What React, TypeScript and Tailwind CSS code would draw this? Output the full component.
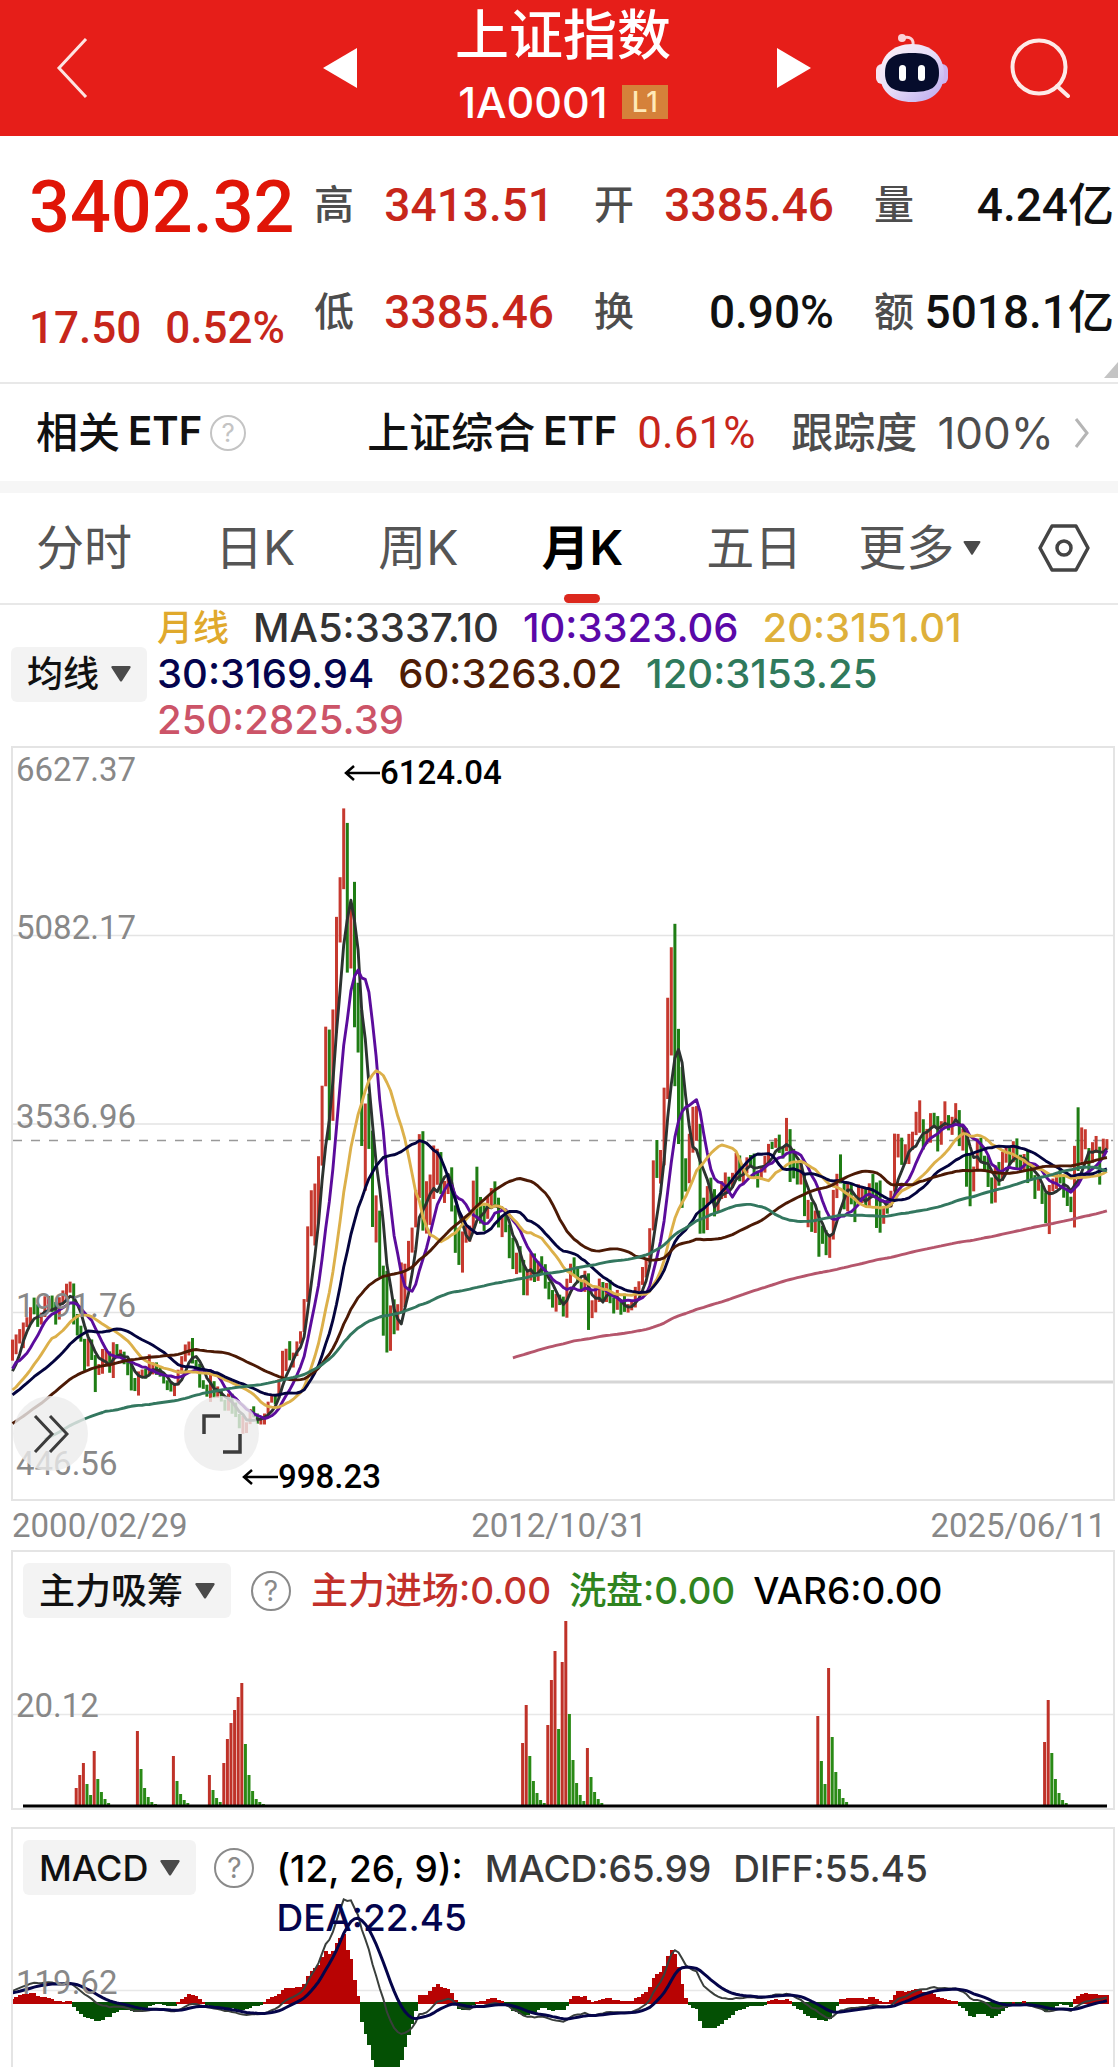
import React, { useState } from "react";

// [high, low, close] per month, starting 2000/02
const MONTHS: [number, number, number][] = [
  [1770, 1597, 1715], [1812, 1650, 1800], [1856, 1738, 1836], [1910, 1700, 1894], [1953, 1872, 1928], [2035, 1900, 2023],
  [2114, 1977, 2021], [2059, 1874, 1910], [1990, 1893, 1961], [2125, 1955, 2070], [2127, 2010, 2073],
  [2131, 1997, 2065], [2078, 1893, 1959], [2117, 1934, 2112], [2173, 2063, 2119], [2228, 2100, 2214], [2245, 2155, 2218],
  [2230, 1894, 1920], [1980, 1804, 1834], [1884, 1753, 1764], [1776, 1515, 1689], [1778, 1550, 1747], [1771, 1603, 1645],
  [1643, 1340, 1491], [1569, 1480, 1524], [1693, 1490, 1603], [1695, 1564, 1667], [1673, 1498, 1515], [1748, 1455, 1732],
  [1733, 1634, 1651], [1687, 1622, 1666], [1671, 1568, 1581], [1590, 1478, 1507], [1577, 1353, 1434], [1455, 1348, 1357],
  [1509, 1311, 1499], [1524, 1464, 1511], [1534, 1450, 1510], [1649, 1477, 1521], [1583, 1485, 1576], [1583, 1481, 1486],
  [1545, 1466, 1476], [1495, 1410, 1421], [1436, 1356, 1367], [1431, 1344, 1348], [1410, 1307, 1397], [1523, 1395, 1497],
  [1634, 1491, 1590], [1730, 1590, 1675], [1754, 1640, 1741], [1783, 1574, 1595], [1603, 1498, 1555], [1572, 1376, 1399],
  [1437, 1366, 1386], [1400, 1302, 1342], [1496, 1259, 1396], [1429, 1290, 1320], [1386, 1292, 1340], [1357, 1262, 1266],
  [1277, 1187, 1191], [1328, 1187, 1306], [1326, 1162, 1181], [1254, 1135, 1159], [1160, 1043, 1060], [1146, 998, 1080],
  [1092, 1004, 1083], [1201, 1077, 1162], [1223, 1131, 1155], [1164, 1080, 1092], [1122, 1074, 1099], [1164, 1074, 1161],
  [1261, 1161, 1258], [1309, 1253, 1299], [1310, 1238, 1298], [1445, 1293, 1440], [1678, 1443, 1641], [1695, 1512, 1672],
  [1757, 1600, 1612], [1663, 1541, 1658], [1755, 1635, 1752], [1838, 1736, 1837], [2102, 1832, 2099], [2698, 2079, 2675],
  [2994, 2617, 2786], [3049, 2541, 2881], [3273, 2723, 3183], [3851, 3196, 3841], [4335, 3846, 4109], [4311, 3404, 3820],
  [4476, 3563, 4471], [5235, 4285, 5218], [5560, 5025, 5552], [6124, 5462, 5954], [6005, 4778, 4871], [5336, 4812, 5261],
  [5522, 4330, 4383], [4695, 4123, 4348], [4472, 3357, 3472], [3705, 2990, 3693], [3786, 3333, 3433], [3483, 2693, 2736],
  [2952, 2566, 2775], [2827, 2284, 2397], [2376, 1802, 2293], [2333, 1664, 1728], [2050, 1678, 1871], [2100, 1814, 1820],
  [2060, 1844, 1990], [2402, 1987, 2082], [2392, 2037, 2373], [2579, 2345, 2477], [2688, 2483, 2632], [2997, 2690, 2959],
  [3454, 2930, 3412], [3478, 2663, 2667], [3068, 2639, 2779], [3123, 2710, 2995], [3361, 2923, 3195], [3334, 3039, 3277],
  [3307, 2963, 2989], [3070, 2890, 3051], [3131, 2963, 3109], [3182, 2820, 2870], [2870, 2481, 2592], [2686, 2382, 2398],
  [2656, 2319, 2637], [2701, 2564, 2638], [2704, 2573, 2655], [3073, 2667, 2978], [3187, 2758, 2820], [2939, 2721, 2808],
  [2868, 2661, 2790], [2944, 2760, 2905], [3012, 2850, 2928], [3067, 2866, 2911], [2933, 2689, 2743], [2788, 2610, 2762],
  [2826, 2650, 2701], [2712, 2437, 2567], [2605, 2348, 2359], [2482, 2307, 2468], [2536, 2319, 2333], [2423, 2134, 2199],
  [2324, 2132, 2292], [2478, 2254, 2428], [2476, 2242, 2262], [2415, 2251, 2396], [2453, 2309, 2372], [2388, 2188, 2225],
  [2244, 2100, 2103], [2176, 2032, 2047], [2145, 1999, 2086], [2138, 2053, 2068], [2122, 1959, 1980], [2269, 1949, 2269],
  [2392, 2234, 2385], [2444, 2289, 2365], [2369, 2232, 2236], [2250, 2165, 2177], [2334, 2161, 2300], [2313, 1849, 1979],
  [2092, 1946, 1993], [2198, 1993, 2098], [2270, 2078, 2174], [2242, 2093, 2141], [2234, 2078, 2220], [2260, 2068, 2115],
  [2113, 1984, 2033], [2177, 2014, 2056], [2079, 1974, 2033], [2146, 1997, 2026], [2061, 1991, 2039], [2087, 2010, 2048],
  [2202, 2033, 2201], [2248, 2168, 2217], [2365, 2218, 2363], [2423, 2279, 2420], [2683, 2401, 2682], [3239, 2665, 3234],
  [3406, 3095, 3210], [3324, 3049, 3310], [3835, 3198, 3747], [4572, 3742, 4441], [4986, 4099, 4611], [5178, 3847, 4277],
  [4317, 3373, 3663], [4006, 2850, 3205], [3256, 2983, 3052], [3457, 3052, 3382], [3678, 3302, 3445], [3684, 3399, 3539],
  [3538, 2638, 2737], [2933, 2640, 2687], [3028, 2668, 3003], [3097, 2905, 2938], [3003, 2780, 2916], [2945, 2807, 2929],
  [3069, 2922, 2979], [3140, 2931, 3085], [3105, 2969, 3004], [3137, 3016, 3100], [3301, 3094, 3250], [3279, 3068, 3103],
  [3174, 3044, 3159], [3264, 3132, 3241], [3283, 3193, 3222], [3295, 3097, 3154], [3154, 3016, 3117], [3193, 3081, 3192],
  [3276, 3139, 3273], [3374, 3200, 3360], [3391, 3332, 3348], [3421, 3342, 3393], [3450, 3300, 3317], [3341, 3254, 3307],
  [3587, 3314, 3480], [3495, 3062, 3259], [3333, 3091, 3168], [3220, 3041, 3082], [3219, 3041, 3095], [3128, 2782, 2847],
  [2915, 2691, 2876], [2897, 2653, 2725], [2827, 2644, 2821], [2827, 2449, 2602], [2703, 2555, 2588], [2666, 2462, 2493],
  [2618, 2440, 2584], [2997, 2590, 2940], [3129, 2930, 3090], [3288, 3050, 3078], [3052, 2838, 2898], [3045, 2822, 2978],
  [3048, 2879, 2932], [2915, 2733, 2886], [3042, 2878, 2905], [3026, 2889, 2929], [3009, 2858, 2871], [3051, 2857, 3050],
  [3127, 2955, 2976], [3058, 2685, 2880], [3074, 2646, 2750], [2865, 2719, 2860], [2914, 2802, 2852], [2990, 2855, 2984],
  [3458, 2984, 3310], [3456, 3263, 3395], [3425, 3202, 3218], [3371, 3209, 3224], [3456, 3209, 3391], [3474, 3325, 3473],
  [3637, 3446, 3483], [3731, 3465, 3509], [3576, 3328, 3441], [3497, 3373, 3446], [3626, 3384, 3615], [3629, 3518, 3591],
  [3602, 3312, 3397], [3560, 3367, 3543], [3723, 3510, 3568], [3610, 3485, 3547], [3596, 3448, 3563], [3708, 3559, 3639],
  [3651, 3356, 3361], [3500, 3319, 3462], [3500, 3023, 3252], [3290, 2863, 3047], [3188, 2985, 3186], [3418, 3150, 3398],
  [3424, 3226, 3253], [3277, 3155, 3202], [3277, 3021, 3024], [3099, 2885, 2893], [3198, 2893, 3151], [3226, 3031, 3089],
  [3310, 3073, 3255], [3342, 3220, 3279], [3342, 3200, 3272], [3396, 3224, 3323], [3419, 3172, 3204], [3285, 3144, 3202],
  [3291, 3151, 3291], [3322, 3053, 3119], [3193, 3078, 3110], [3118, 2923, 3018], [3090, 2990, 3029], [3041, 2882, 2974],
  [2976, 2724, 2788], [3037, 2635, 3015], [3090, 2986, 3041], [3128, 3005, 3104], [3174, 3050, 3086], [3113, 2933, 2967],
  [3010, 2865, 2938], [2941, 2815, 2842], [3358, 2689, 3336], [3674, 3152, 3279], [3509, 3227, 3326], [3494, 3330, 3351],
  [3340, 3140, 3250], [3388, 3220, 3320], [3439, 3300, 3335], [3351, 3040, 3279], [3417, 3262, 3347], [3413, 3330, 3402],
];

// closes before the visible range (1990/12 - 2000/01), needed by the averages
const HISTORY = [
  127,
  129, 132, 120, 113, 114, 137, 143, 178, 180, 218, 259, 292,
  313, 364, 381, 445, 1234, 1191, 1052, 823, 702, 507, 724, 780,
  1198, 1339, 925, 1358, 935, 1007, 881, 895, 890, 814, 984, 833,
  770, 770, 704, 592, 556, 469, 333, 785, 791, 654, 683, 647,
  562, 549, 646, 579, 700, 630, 695, 723, 722, 717, 641, 555,
  537, 552, 556, 681, 643, 804, 822, 810, 875, 976, 1032, 917,
  964, 1040, 1234, 1393, 1285, 1250, 1189, 1221, 1097, 1180, 1139, 1194,
  1222, 1206, 1243, 1343, 1411, 1339, 1316, 1150, 1242, 1217, 1247, 1146,
  1134, 1090, 1158, 1120, 1279, 1689, 1601, 1627, 1570, 1504, 1434, 1366,
  1535,
];

const CLOSES = [...HISTORY, ...MONTHS.map((m) => m[2])];

// [first month index, number of red bars, bar heights]
const FLOWS: [number, number, number[]][] = [
  [18, 3, [17, 30, 42, 21, 10]],
  [23, 1, [54, 26, 13, 6, 2]],
  [35, 1, [74, 36, 17, 8, 3, 1]],
  [45, 1, [49, 24, 11, 5, 2]],
  [55, 1, [30, 15, 7, 3]],
  [59, 6, [42, 66, 82, 95, 108, 122, 61, 30, 14, 6, 3, 1]],
  [142, 2, [62, 100, 49, 24, 12, 5, 2]],
  [149, 3, [80, 125, 154, 76]],
  [153, 2, [143, 184, 91, 45, 22, 10, 4]],
  [160, 1, [57, 28, 13, 6, 2]],
  [224, 1, [89, 44, 21]],
  [227, 1, [137, 68, 33, 16, 7, 3]],
  [287, 2, [63, 105, 52, 26, 12, 5, 2]],
];

const STEP = 3.6;
const xAt = (i: number) => i * STEP - 0.5;
const yAt = (v: number) => (6627.37 - v) / 8.197 - 1;

function maPoints(n: number) {
  const points: string[] = [];
  MONTHS.forEach((_, i) => {
    const end = HISTORY.length + i + 1;
    if (end < n) return;
    const sum = CLOSES.slice(end - n, end).reduce((a, b) => a + b, 0);
    points.push(`${xAt(i).toFixed(1)},${yAt(sum / n).toFixed(1)}`);
  });
  return points.join(" ");
}

function macd() {
  let fast = CLOSES[0];
  let slow = CLOSES[0];
  let dea = 0;
  const rows = CLOSES.map((c) => {
    fast = (fast * 11 + c * 2) / 13;
    slow = (slow * 25 + c * 2) / 27;
    const diff = fast - slow;
    dea = (dea * 8 + diff * 2) / 10;
    return { diff, dea, bar: (diff - dea) * 2 };
  });
  return rows.slice(HISTORY.length);
}

const AVERAGES = [
  { n: 5, label: "MA5:3337.10", color: "#2c3330", text: "text-[#333333]" },
  { n: 10, label: "10:3323.06", color: "#5b0c9c", text: "text-[#5a08a8]" },
  { n: 20, label: "20:3151.01", color: "#dcb04a", text: "text-[#deb03a]" },
  { n: 30, label: "30:3169.94", color: "#04043e", text: "text-[#04044e]" },
  { n: 60, label: "60:3263.02", color: "#4c1a05", text: "text-[#4f1d06]" },
  { n: 120, label: "120:3153.25", color: "#33775f", text: "text-[#2f7a5c]" },
  { n: 250, label: "250:2825.39", color: "#b5566c", text: "text-[#cc5468]" },
];

function Caret({ className }: { className: string }) {
  return (
    <svg viewBox="0 0 20 16" className={className} fill="#4a4a4a" aria-hidden="true">
      <path d="M1.5 0h17c1 0 1.5 1 1 1.800L11 15c-.5.8-1.500.8-2 0L.5 1.800C0 1 .5 0 1.500 0z" />
    </svg>
  );
}

function Help({ className }: { className: string }) {
  return (
    <button type="button" aria-label="说明" className={`flex shrink-0 items-center justify-center rounded-full border-2 leading-none ${className}`}>
      ?
    </button>
  );
}

function IndicatorButton({ children }: { children: React.ReactNode }) {
  return (
    <button type="button" className="flex h-[55px] shrink-0 items-center gap-3 rounded-md bg-[#f3f3f3] px-4 text-[36px] font-medium text-[#111]">
      {children}
      <Caret className="h-4 w-5" />
    </button>
  );
}

function Header() {
  return (
    <header className="grid h-[136px] grid-cols-[1fr_488px_1fr] items-center bg-[#e61e19] pl-4 text-white">
      <button type="button" aria-label="返回" className="ml-10 w-fit">
        <svg viewBox="0 0 32 60" className="h-[60px] w-8" fill="none" stroke="#fde4e2" strokeWidth="3">
          <path d="M30 1 3 30l27 29" />
        </svg>
      </button>
      <div className="flex items-center justify-between">
        <button type="button" aria-label="上一个">
          <svg viewBox="0 0 34 40" className="h-10 w-[34px]" fill="#fff">
            <path d="M34 0v40L0 20z" />
          </svg>
        </button>
        <div className="mr-2 flex flex-col items-center">
          <h1 className="text-[54px] leading-[68px] font-medium">上证指数</h1>
          <div className="flex items-center gap-3.5 text-[43px] leading-[64px] font-medium">
            1A0001
            <span className="bg-[#d5813a] px-2.5 text-[28px] leading-[34px] font-medium text-[#ffe9b8]">L1</span>
          </div>
        </div>
        <button type="button" aria-label="下一个">
          <svg viewBox="0 0 34 40" className="h-10 w-[34px]" fill="#fff">
            <path d="M0 0v40l34-20z" />
          </svg>
        </button>
      </div>
      <div className="flex items-center justify-between pr-12 pl-16">
        <button type="button" aria-label="智能助手">
          <svg viewBox="0 0 74 70" className="h-[70px] w-[74px]">
            <defs>
              <linearGradient id="head" x1="0" y1="0" x2="1" y2="1">
                <stop offset="0" stopColor="#fff3f6" />
                <stop offset=".5" stopColor="#e6dcf8" />
                <stop offset="1" stopColor="#b9a6ee" />
              </linearGradient>
            </defs>
            <path d="M28 5c7-2 11 1 10 8" fill="none" stroke="#fbd3d8" strokeWidth="3" />
            <circle cx="27" cy="5" r="4" fill="#fbd3d8" />
            <rect x="1" y="31" width="12" height="20" rx="6" fill="#f6e4f2" />
            <rect x="61" y="31" width="12" height="20" rx="6" fill="#cdb4ef" />
            <path d="M37 11c19 0 32 12 32 30S56 69 37 69 5 59 5 41s13-30 32-30z" fill="url(#head)" />
            <path d="M37 20c18 0 27 5 27 20s-9 19-27 19-27-4-27-19 9-20 27-20z" fill="#060c2c" />
            <rect x="24" y="32" width="7" height="16" rx="3.500" fill="#fff" />
            <rect x="43" y="32" width="7" height="16" rx="3.500" fill="#fff" />
          </svg>
        </button>
        <button type="button" aria-label="搜索">
          <svg viewBox="0 0 60 60" className="h-[60px] w-[60px]" fill="none" stroke="#fdeae8" strokeWidth="4">
            <circle cx="29" cy="29" r="26.500" />
            <path d="m47 48 11 10" strokeLinecap="round" />
          </svg>
        </button>
      </div>
    </header>
  );
}

const QUOTES = [
  { label: "高", value: "3413.51", color: "text-[#c7261b]" },
  { label: "开", value: "3385.46", color: "text-[#c7261b]" },
  { label: "量", value: "4.24亿", color: "text-[#111]" },
  { label: "低", value: "3385.46", color: "text-[#c7261b]" },
  { label: "换", value: "0.90%", color: "text-[#111]" },
  { label: "额", value: "5018.1亿", color: "text-[#111]" },
];

function Quote() {
  return (
    <section className="relative flex h-[248px] border-b-2 border-[#e8e8e8] font-[Roboto,'Noto_Sans_CJK_SC',sans-serif] font-medium">
      <div className="flex w-[314px] shrink-0 flex-col gap-4 pt-5 pl-[29px] leading-[104px] whitespace-nowrap">
        <strong className="text-[72px] font-medium text-[#e01507]">3402.32</strong>
        <div className="flex gap-6 text-[44px] text-[#c7261b]">
          <span>17.50</span>
          <span>0.52%</span>
        </div>
      </div>
      <dl className="grid flex-1 grid-cols-3 content-start gap-x-10 pt-4 pr-1 text-[46px] leading-[107px] whitespace-nowrap">
        {QUOTES.map((q) => (
          <div key={q.label} className="flex h-[107px] justify-between">
            <dt className="text-[40px] text-[#4d4d4d]">{q.label}</dt>
            <dd className={q.color}>{q.value}</dd>
          </div>
        ))}
      </dl>
      <svg viewBox="0 0 14 16" className="absolute right-0 bottom-1 h-4 w-3.5" fill="#c4c4c4" aria-hidden="true">
        <path d="M14 0v16H0z" />
      </svg>
    </section>
  );
}

function EtfRow() {
  return (
    <section className="flex h-[109px] items-center justify-between border-b-12 border-[#f6f6f6] pr-7 pl-9 text-[42px] whitespace-nowrap">
      <div className="flex items-center gap-2 font-medium text-[#111]">
        <span className="flex gap-2">
          相关<span className="text-[40px] font-semibold">ETF</span>
        </span>
        <Help className="h-9 w-9 border-[#c4c4c4] text-[26px] font-normal text-[#c4c4c4]" />
      </div>
      <a href="#etf" className="flex items-center gap-5 text-[#4d4d4d]">
        <span className="flex gap-2 font-medium text-[#111]">
          上证综合<span className="text-[40px] font-semibold">ETF</span>
        </span>
        <span className="font-[Roboto] text-[44px] text-[#c7261b]">0.61%</span>
        <span className="ml-4 font-medium">跟踪度</span>
        <span className="text-[44px]">100%</span>
        <svg viewBox="0 0 16 32" className="h-8 w-4" fill="none" stroke="#b5b5b5" strokeWidth="3">
          <path d="m2 2 11 14L2 30" />
        </svg>
      </a>
    </section>
  );
}

const TABS = ["分时", "日K", "周K", "月K", "五日"];

function Tabs() {
  const [active, setActive] = useState("月K");

  return (
    <nav className="flex h-28 items-stretch justify-between border-b-2 border-[#e8e8e8] pr-7 pl-9 text-[48px] whitespace-nowrap text-[#555]">
      <div className="flex gap-[83px]">
        {TABS.map((tab) => (
          <button
            key={tab}
            type="button"
            onClick={() => setActive(tab)}
            className={
              tab === active
                ? "relative font-semibold text-black after:absolute after:bottom-0 after:left-1/2 after:h-[9px] after:w-9 after:-translate-x-1/2 after:rounded-full after:bg-[#dc281e]"
                : "relative"
            }
          >
            {tab}
          </button>
        ))}
      </div>
      <button type="button" className="flex items-center gap-2">
        更多
        <Caret className="h-3.5 w-5" />
      </button>
      <button type="button" aria-label="设置">
        <svg viewBox="0 0 52 48" className="h-12 w-[52px]" fill="none" stroke="#444" strokeWidth="3.500" strokeLinejoin="round">
          <path d="M14 2h24l12 22-12 22H14L2 24z" />
          <circle cx="26" cy="24" r="7" />
        </svg>
      </button>
    </nav>
  );
}

function PriceChart() {
  return (
    <div className="relative mr-[3px] ml-[11px] h-[755px] border-2 border-[#e4e4e4] font-[Roboto] text-[33px] leading-9 text-[#888]">
      <svg viewBox="0 0 1100 751" preserveAspectRatio="none" className="block h-full w-full overflow-visible">
        <g stroke="#e4e4e4" strokeWidth="1.500">
          <path d="M0 187.500h1100M0 376h1100M0 564.500h1100" />
          <path d="M292 634h808" stroke="#d6d6d6" strokeWidth="3" />
        </g>
        <path d="M0 392.500h1100" stroke="#999" strokeWidth="1.500" strokeDasharray="9 9" />
        {MONTHS.map(([high, low, close], i) => {
          const prev = i ? MONTHS[i - 1][2] : 1535;
          return (
            <rect
              key={i}
              x={xAt(i) - 1.5}
              y={yAt(high)}
              width="3"
              height={yAt(low) - yAt(high)}
              fill={close >= prev ? "#c6392f" : "#1f7d14"}
            />
          );
        })}
        {AVERAGES.map((a) => (
          <polyline key={a.n} points={maPoints(a.n)} fill="none" stroke={a.color} strokeWidth="2.900" strokeLinejoin="round" />
        ))}
      </svg>

      <span className="absolute top-1 left-[3px]">6627.37</span>
      <span className="absolute top-[162px] left-[3px]">5082.17</span>
      <span className="absolute top-[351px] left-[3px]">3536.96</span>
      <span className="absolute top-[540px] left-[3px]">1991.76</span>
      <span className="absolute bottom-[17px] left-[3px]">446.56</span>

      <Marker className="top-[7px] left-[331px]" value="6124.04" />
      <Marker className="top-[711px] left-[229px]" value="998.23" />

      <button type="button" aria-label="展开" className="absolute top-[648px] left-0 flex h-[75px] w-[75px] items-center justify-center rounded-full bg-[#ececec]/80">
        <svg viewBox="0 0 36 38" className="h-[38px] w-9" fill="none" stroke="#3c3c3c" strokeWidth="3">
          <path d="m2 1 17 18L2 37M17 1l17 18-17 18" />
        </svg>
      </button>
      <button type="button" aria-label="全屏" className="absolute top-[648px] left-[171px] flex h-[75px] w-[75px] items-center justify-center rounded-full bg-[#ececec]/80">
        <svg viewBox="0 0 40 40" className="h-10 w-10" fill="none" stroke="#3c3c3c" strokeWidth="3.500">
          <path d="M18 2H2v18M38 20v18H21" />
        </svg>
      </button>
    </div>
  );
}

function Marker({ className, value }: { className: string; value: string }) {
  return (
    <span className={`absolute flex items-center font-medium text-black ${className}`}>
      <svg viewBox="0 0 36 18" className="h-[18px] w-9" fill="none" stroke="#000" strokeWidth="2.500">
        <path d="M10 2 2 9l8 7M2 9h34" />
      </svg>
      {value}
    </span>
  );
}

function FlowPanel() {
  return (
    <section className="relative mr-[3px] ml-[11px] h-[260px] border-2 border-[#e4e4e4]">
      <svg viewBox="0 0 1100 256" preserveAspectRatio="none" className="absolute inset-0 h-full w-full">
        <path d="M0 162.500h1100" stroke="#e8e8e8" strokeWidth="1.500" />
        {FLOWS.map(([start, reds, heights]) =>
          heights.map((h, k) => (
            <rect
              key={`${start}-${k}`}
              x={xAt(start + k) - 2.6}
              y={253 - h}
              width="3"
              height={h}
              fill={k < reds ? "#bf3229" : "#2a8a16"}
            />
          ))
        )}
        <path d="M10 254h1084" stroke="#000" strokeWidth="3" />
      </svg>
      <div className="relative flex items-center pt-[11px] pl-[10px] text-[37px] font-medium whitespace-nowrap">
        <IndicatorButton>主力吸筹</IndicatorButton>
        <Help className="ml-5 h-10 w-10 border-[#8a8a8a] text-[28px] font-normal text-[#8a8a8a]" />
        <div className="ml-5 flex gap-[18px]">
          <span className="text-[#c2302a]">主力进场:0.00</span>
          <span className="text-[#2f8420]">洗盘:0.00</span>
          <span className="text-black">VAR6:0.00</span>
        </div>
      </div>
      <span className="absolute top-[136px] left-[3px] font-[Roboto] text-[33px] leading-9 text-[#888]">20.12</span>
    </section>
  );
}

function MacdPanel() {
  const rows = macd();
  const zero = 174;
  const y = (v: number) => zero - v / 9.9;
  const line = (key: "diff" | "dea") => rows.map((r, i) => `${xAt(i).toFixed(1)},${y(r[key]).toFixed(1)}`).join(" ");

  return (
    <section className="relative mt-[17px] mr-[3px] ml-[11px] h-[240px] overflow-hidden border-2 border-b-0 border-[#e4e4e4]">
      <svg viewBox="0 0 1100 238" preserveAspectRatio="none" className="absolute inset-0 h-full w-full">
        <path d="M0 161.500h1100" stroke="#e8e8e8" strokeWidth="1.500" />
        {rows.map((r, i) => (
          <rect
            key={i}
            x={xAt(i) - 1.8}
            y={r.bar >= 0 ? y(r.bar) - 1 : zero - 1}
            width="4"
            height={Math.abs(r.bar) / 9.9 + 2}
            fill={r.bar >= 0 ? "#b80303" : "#045004"}
            shapeRendering="crispEdges"
          />
        ))}
        <polyline points={line("diff")} fill="none" stroke="#3a3f3c" strokeWidth="2" />
        <polyline points={line("dea")} fill="none" stroke="#05054a" strokeWidth="3" />
      </svg>
      <div className="relative flex items-start pt-[11px] pl-[10px] text-[37px] font-medium">
        <IndicatorButton>MACD</IndicatorButton>
        <Help className="mt-2 ml-[18px] h-10 w-10 border-[#8a8a8a] text-[28px] font-normal text-[#8a8a8a]" />
        <div className="ml-[22px] flex flex-wrap gap-x-[22px] pt-1 leading-[49px] whitespace-nowrap">
          <span className="text-black">(12, 26, 9):</span>
          <span className="text-[#3a3a3a]">MACD:65.99</span>
          <span className="text-[#3a3a3a]">DIFF:55.45</span>
          <span className="text-[#04044e]">DEA:22.45</span>
        </div>
      </div>
      <span className="absolute top-[136px] left-[3px] font-[Roboto] text-[33px] leading-9 text-[#888]">119.62</span>
    </section>
  );
}

function App() {
  return (
    <main className="w-full overflow-hidden bg-white font-[Inter,'Noto_Sans_CJK_SC',sans-serif]">
      <Header />
      <Quote />
      <EtfRow />
      <Tabs />
      <div className="flex items-center pr-20 pb-[3px] pl-[11px]">
        <IndicatorButton>均线</IndicatorButton>
        <div className="ml-2.5 flex flex-wrap gap-x-6 text-[40px] leading-[46px] font-medium whitespace-nowrap">
          <span className="text-[36px] text-[#e0a92c]">月线</span>
          {AVERAGES.map((a) => (
            <span key={a.n} className={a.text}>
              {a.label}
            </span>
          ))}
        </div>
      </div>
      <PriceChart />
      <div className="flex h-[49px] items-center justify-between px-3 font-[Roboto] text-[33px] text-[#888]">
        <time>2000/02/29</time>
        <time>2012/10/31</time>
        <time>2025/06/11</time>
      </div>
      <FlowPanel />
      <MacdPanel />
    </main>
  );
}

export default App;
